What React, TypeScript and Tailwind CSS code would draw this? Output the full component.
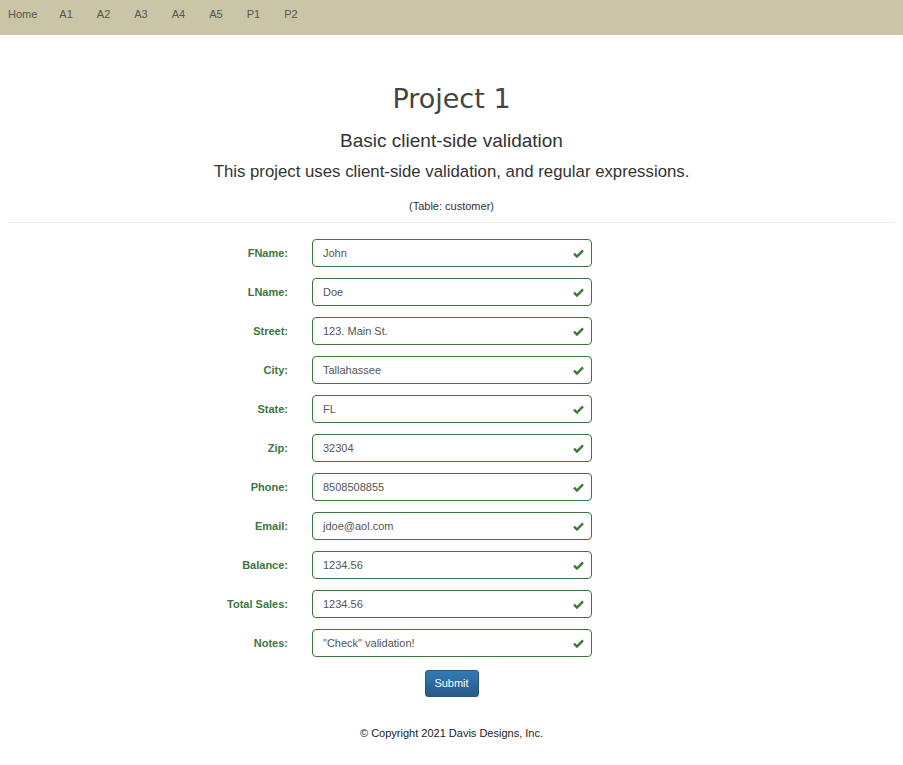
import React from 'react';

const fields: [string, string][] = [
  ['FName:', 'John'],
  ['LName:', 'Doe'],
  ['Street:', '123. Main St.'],
  ['City:', 'Tallahassee'],
  ['State:', 'FL'],
  ['Zip:', '32304'],
  ['Phone:', '8508508855'],
  ['Email:', 'jdoe@aol.com'],
  ['Balance:', '1234.56'],
  ['Total Sales:', '1234.56'],
  ['Notes:', '"Check" validation!'],
];

const links = ['Home', 'A1', 'A2', 'A3', 'A4', 'A5', 'P1', 'P2'];

function Ok() {
  return (
    <svg width="11" height="9" viewBox="0 0 11 9" className="shrink-0">
      <path d="M1 4.6 L4 7.5 L10 1.3" fill="none" stroke="#3c763d" strokeWidth="2.4" />
    </svg>
  );
}

export default function App() {
  return (
    <div className="min-h-[765px] bg-white text-[11px] text-[#333]" style={{ fontFamily: '"Liberation Sans", Arial, sans-serif' }}>
      {/* Nav */}
      <div className="h-[35px] bg-[#c9c5a6] flex items-start pt-[7px] pl-[8px] gap-[24px]">
        {links.map((l) => (
          <a key={l} className={l === 'Home' ? 'text-[11px] text-[#555] leading-[14px] -mr-[2px]' : 'text-[11px] text-[#555] leading-[14px]'}>
            {l}
          </a>
        ))}
      </div>

      <div className="px-[8px] text-center">
        <h1 className="mt-[47px] text-[27px] leading-[34px] text-[#444]" style={{ fontFamily: '"DejaVu Sans", sans-serif' }}>
          Project 1
        </h1>
        <h2 className="mt-[14px] text-[19px] leading-[22px] text-[#333]">Basic client-side validation</h2>
        <p className="mt-[10px] text-[16.8px] leading-[20px] text-[#333]">
          This project uses client-side validation, and regular expressions.
        </p>
        <p className="mt-[17px] text-[11px] leading-[14px] text-[#333]">(Table: customer)</p>
        <div className="mt-[9px] border-t border-[#eee]" />
      </div>

      {/* Form */}
      <div className="mt-[16px] ml-[200px] flex flex-col gap-[11px]">
        {fields.map(([label, value]) => (
          <div key={label} className="flex items-center h-[28px]">
            <label className="w-[88px] text-right font-bold text-[#3c763d]">{label}</label>
            <div className="ml-[24px] w-[280px] h-[28px] border border-[#3c763d] rounded-[4px] flex items-center pl-[10px] pr-[7px]">
              <span className="flex-1 text-[#555]">{value}</span>
              <Ok />
            </div>
          </div>
        ))}
      </div>

      <div className="flex justify-center mt-[13px]">
        <button className="w-[54px] h-[27px] rounded-[3px] border border-[#245580] bg-gradient-to-b from-[#337ab7] to-[#265a88] text-white text-[11px]">
          Submit
        </button>
      </div>

      <p className="text-center mt-[28px] text-[11px] text-[#222]">© Copyright 2021 Davis Designs, Inc.</p>
    </div>
  );
}
